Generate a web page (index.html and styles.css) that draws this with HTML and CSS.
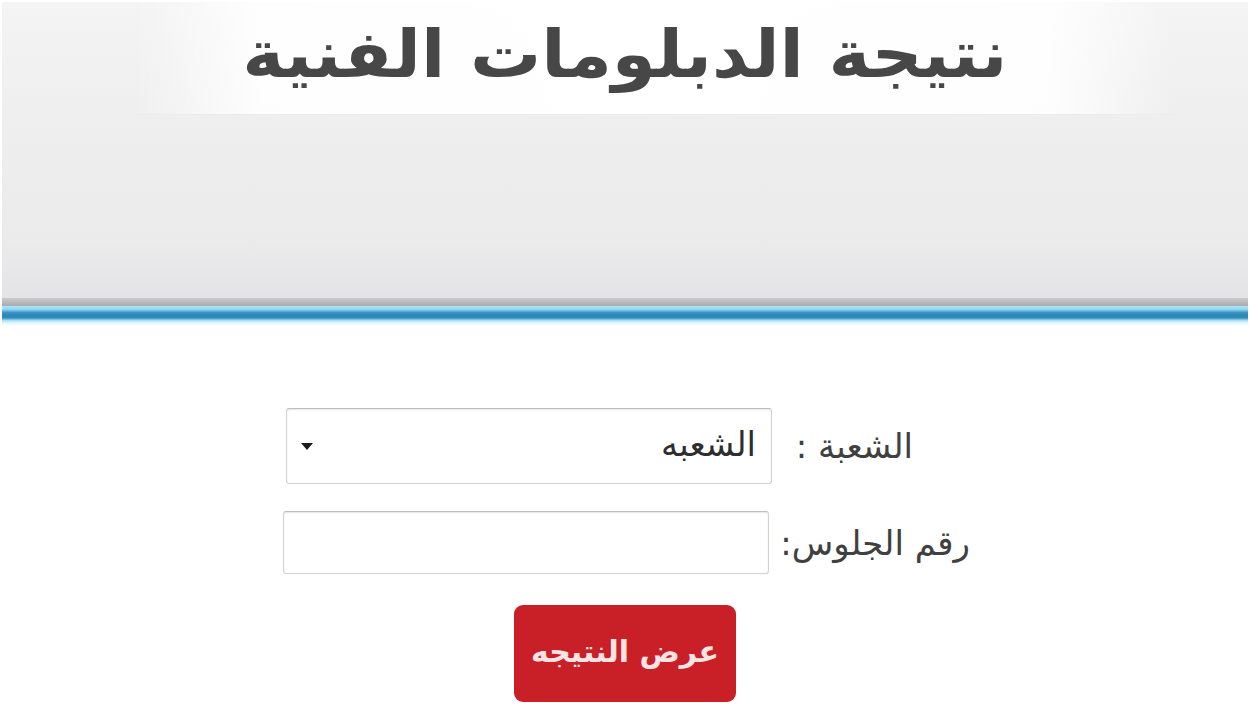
FILE: index.html
```html
<!DOCTYPE html>
<html lang="ar" dir="rtl">
<head>
<meta charset="utf-8">
<title>نتيجة الدبلومات الفنية</title>
<link rel="stylesheet" href="styles.css">
</head>
<body>
<header class="banner">
  <div class="title-band">
    <h1 class="title">نتيجة الدبلومات الفنية</h1>
  </div>
</header>
<div class="rule-gray"></div>
<div class="rule-blue"></div>
<main class="form">
  <div class="row row-select">
    <label class="label">الشعبة :</label>
    <div class="select">
      <span class="select-text">الشعبه</span>
      <span class="caret"></span>
    </div>
  </div>
  <div class="row row-input">
    <label class="label">رقم الجلوس:</label>
    <div class="input"></div>
  </div>
  <div class="row row-btn">
    <button class="btn">عرض النتيجه</button>
  </div>
</main>
</body>
</html>
```
FILE: styles.css
```css
html, body {
  margin: 0;
  padding: 0;
  background: #ffffff;
  width: 1250px;
  height: 720px;
  overflow: hidden;
  font-family: "DejaVu Sans", "Noto Sans", sans-serif;
}
.banner {
  margin: 2px 2px 0 2px;
  height: 296px;
  background: linear-gradient(180deg, #f4f4f4 0%, #eeeeef 45%, #ebebec 80%, #e4e4e6 100%);
  display: flex;
  flex-direction: column;
  align-items: center;
}
.title-band {
  width: 1040px;
  height: 112px;
  margin-left: 60px;
  background: linear-gradient(90deg, rgba(255,255,255,0) 0%, rgba(255,255,255,0.9) 12%, #ffffff 50%, rgba(255,255,255,0.9) 88%, rgba(255,255,255,0) 100%);
  display: flex;
  justify-content: center;
  align-items: flex-start;
  box-shadow: 0 1px 1px -1px rgba(190,190,190,0.4);
}
.title {
  margin: 17px 60px 0 0;
  font-size: 66px;
  font-weight: bold;
  color: #474747;
  line-height: 1.1;
  transform: scaleX(1.075);
}
.rule-gray {
  margin: 0 2px;
  height: 8px;
  background: linear-gradient(180deg, #cbcbcd, #a9a9ac);
}
.rule-blue {
  margin: 0 2px;
  height: 20px;
  background: linear-gradient(180deg, #b3e4f8 0%, #8fd2f1 18%, #3a96c6 32%, #2a86b7 50%, #3690c0 60%, #a8def3 72%, #e4f8fd 85%, #ffffff 100%);
}
.form {
  display: flex;
  flex-direction: column;
  align-items: center;
  padding-top: 82px;
}
.row {
  display: flex;
  align-items: center;
  justify-content: space-between;
}
.row-select {
  width: 627px;
  margin-right: 51px;
}
.row-input {
  width: 687px;
  margin-left: 3px;
  margin-top: 27px;
}
.label {
  font-size: 34px;
  color: #404040;
  white-space: nowrap;
}
.select {
  width: 486px;
  height: 76px;
  box-sizing: border-box;
  border: 1px solid #d2d2d2;
  border-top-color: #bdbdbd;
  border-radius: 3px;
  box-shadow: inset 0 1px 2px rgba(0,0,0,0.10);
  display: flex;
  align-items: center;
  justify-content: space-between;
  padding: 0 15px 4px 14px;
  background: #fff;
}
.select-text {
  font-size: 34px;
  color: #2e2e2e;
}
.caret {
  width: 0;
  height: 0;
  margin-top: 4px;
  border-left: 6px solid transparent;
  border-right: 6px solid transparent;
  border-top: 7px solid #1a1a1a;
}
.input {
  width: 486px;
  height: 63px;
  box-sizing: border-box;
  border: 1px solid #d2d2d2;
  border-top-color: #bdbdbd;
  border-radius: 3px;
  box-shadow: inset 0 1px 2px rgba(0,0,0,0.10);
  background: #fff;
}
.row-btn {
  margin-top: 31px;
  justify-content: center;
}
.btn {
  width: 222px;
  height: 97px;
  border: none;
  border-radius: 9px;
  background: #c91f27;
  color: #f9e4e5;
  font-family: "DejaVu Sans", sans-serif;
  font-size: 30px;
  font-weight: bold;
  padding: 0 0 4px 0;
}
```
